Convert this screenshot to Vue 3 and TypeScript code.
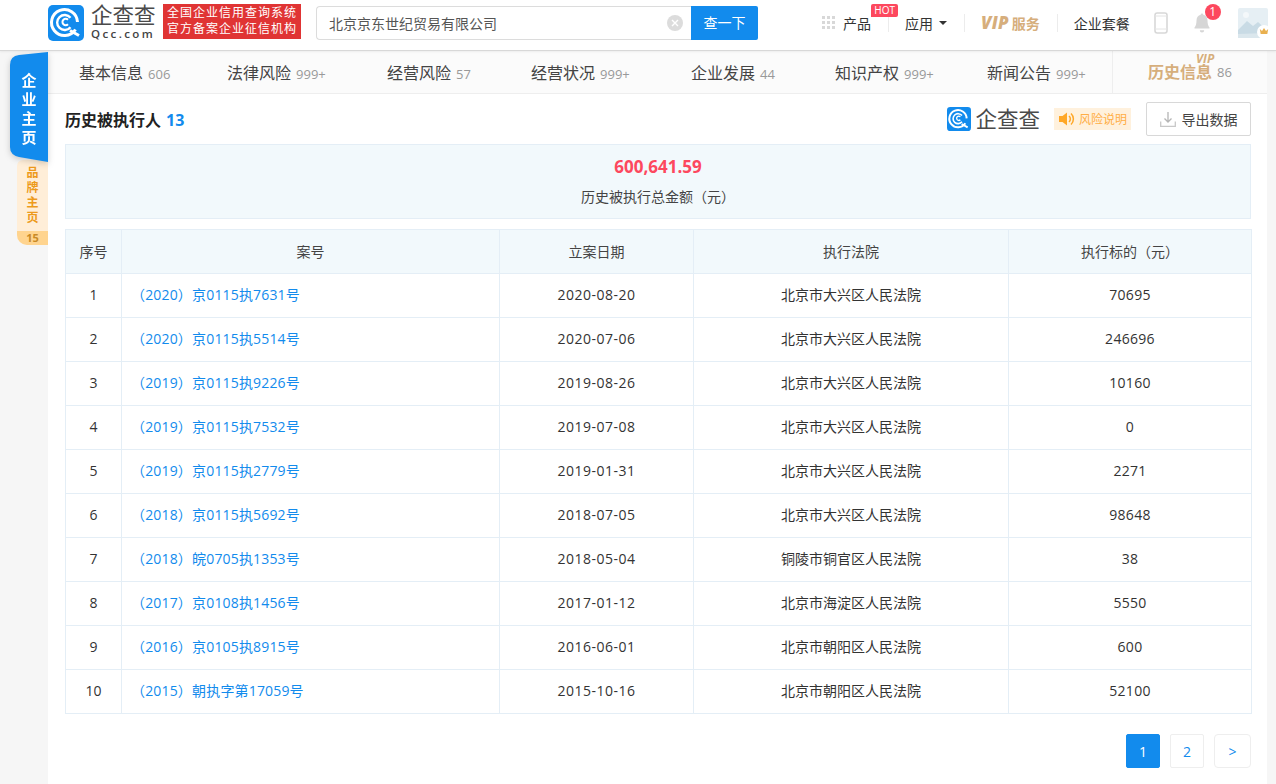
<script setup lang="ts">
interface Row { no: number; caseNo: string; date: string; court: string; amount: string }
const rows: Row[] = [
  { no: 1, caseNo: '（2020）京0115执7631号', date: '2020-08-20', court: '北京市大兴区人民法院', amount: '70695' },
  { no: 2, caseNo: '（2020）京0115执5514号', date: '2020-07-06', court: '北京市大兴区人民法院', amount: '246696' },
  { no: 3, caseNo: '（2019）京0115执9226号', date: '2019-08-26', court: '北京市大兴区人民法院', amount: '10160' },
  { no: 4, caseNo: '（2019）京0115执7532号', date: '2019-07-08', court: '北京市大兴区人民法院', amount: '0' },
  { no: 5, caseNo: '（2019）京0115执2779号', date: '2019-01-31', court: '北京市大兴区人民法院', amount: '2271' },
  { no: 6, caseNo: '（2018）京0115执5692号', date: '2018-07-05', court: '北京市大兴区人民法院', amount: '98648' },
  { no: 7, caseNo: '（2018）皖0705执1353号', date: '2018-05-04', court: '铜陵市铜官区人民法院', amount: '38' },
  { no: 8, caseNo: '（2017）京0108执1456号', date: '2017-01-12', court: '北京市海淀区人民法院', amount: '5550' },
  { no: 9, caseNo: '（2016）京0105执8915号', date: '2016-06-01', court: '北京市朝阳区人民法院', amount: '600' },
  { no: 10, caseNo: '（2015）朝执字第17059号', date: '2015-10-16', court: '北京市朝阳区人民法院', amount: '52100' },
]
const tabs = [
  { name: '基本信息', count: '606' },
  { name: '法律风险', count: '999+' },
  { name: '经营风险', count: '57' },
  { name: '经营状况', count: '999+' },
  { name: '企业发展', count: '44' },
  { name: '知识产权', count: '999+' },
  { name: '新闻公告', count: '999+' },
]
const dots = Array.from({ length: 9 }, (_, i) => i)
</script>

<template>
  <div class="page">
    <header class="topbar">
      <div class="brand">
        <svg class="logo-icon" viewBox="0 0 36 36" width="36" height="36">
          <rect width="36" height="36" rx="5" fill="#128bed" />
          <path d="M27.500 24.500A13 13 0 1 1 29.500 17" fill="none" stroke="#fff" stroke-width="3" />
          <path d="M22.500 12.800A7.500 7.500 0 1 0 22.500 22.200" fill="none" stroke="#fff" stroke-width="2.400" />
          <path d="M20 14.800a3.200 3.200 0 1 0 0 4.400" fill="none" stroke="#fff" stroke-width="2" />
          <path d="M22 25.500l9 5" stroke="#fff" stroke-width="3" />
        </svg>
        <div class="logo-text">
          <div class="logo-cn">企查查</div>
          <div class="logo-en">Qcc.com</div>
        </div>
        <div class="slogan">
          <div>全国企业信用查询系统</div>
          <div>官方备案企业征信机构</div>
        </div>
      </div>
      <div class="search">
        <div class="search-input">
          <span>北京京东世纪贸易有限公司</span>
          <svg class="clear" viewBox="0 0 16 16" width="16" height="16">
            <circle cx="8" cy="8" r="8" fill="#dcdcdc" />
            <path d="M5 5l6 6M11 5l-6 6" stroke="#fff" stroke-width="1.400" />
          </svg>
        </div>
        <div class="search-btn">查一下</div>
      </div>
      <nav class="topnav">
        <div class="nav-item product">
          <span class="grid-dots"><i v-for="d in dots" :key="d"></i></span>
          <span>产品</span>
          <span class="hot">HOT</span>
        </div>
        <span class="sep"></span>
        <div class="nav-item apps"><span>应用</span><span class="caret"></span></div>
        <span class="sep"></span>
        <div class="nav-item vip"><span class="vip-mark">VIP</span><span>服务</span></div>
        <span class="sep"></span>
        <div class="nav-item plan">企业套餐</div>
        <svg class="phone" viewBox="0 0 14 22" width="14" height="22">
          <rect x="1" y="1" width="12" height="20" rx="2.200" fill="#fff" stroke="#d8d8d8" stroke-width="1.600" />
          <path d="M1 17h12M1 4h12" stroke="#e4e4e4" stroke-width="1" />
        </svg>
        <div class="bell">
          <svg viewBox="0 0 16 20" width="16" height="20">
            <path d="M8 0.500c.8 0 1.300.6 1.300 1.300 2.700.6 4.200 2.800 4.200 5.700 0 3.500.7 5.500 2 7v1H.5v-1c1.300-1.500 2-3.500 2-7 0-2.900 1.500-5.100 4.200-5.700C6.700 1.100 7.200.5 8 .5z" fill="#d6d6d6" />
            <path d="M5.800 17.300h4.400a2.200 2.200 0 0 1-4.400 0z" fill="#d6d6d6" />
          </svg>
          <span class="badge">1</span>
        </div>
        <div class="avatar">
          <svg viewBox="0 0 30 30" width="30" height="30">
            <rect width="30" height="30" rx="2" fill="#e6eff4" />
            <circle cx="8" cy="7" r="3" fill="#f4f8fa" />
            <path d="M0 22l9-9 6 5 5-4 10 9v7H0z" fill="#c9dbe5" />
            <path d="M0 26l30-1v5H0z" fill="#dbe7ed" />
          </svg>
          <span class="crown">
            <svg viewBox="0 0 12 10" width="10" height="9"><path d="M1 2l2.600 2.500L6 .8l2.400 3.700L11 2l-1 6H2z" fill="#e9b04f" /></svg>
          </span>
        </div>
      </nav>
    </header>

    <div class="body">
      <aside class="rail">
        <div class="rail-main-wrap">
          <div class="rail-main">企<br />业<br />主<br />页</div>
        </div>
        <div class="rail-brand">
          <div class="rail-brand-text">品<br />牌<br />主<br />页</div>
          <div class="rail-brand-count">15</div>
        </div>
      </aside>

      <main class="main">
        <div class="tabs">
          <div v-for="t in tabs" :key="t.name" class="tab">
            <span class="tab-name">{{ t.name }}</span><span class="tab-count">{{ t.count }}</span>
          </div>
          <div class="tab tab-history">
            <span class="tab-name">历史信息</span><span class="tab-count">86</span>
            <span class="tab-vip">VIP</span>
          </div>
        </div>

        <section class="content">
          <div class="section-head">
            <h3 class="section-title">历史被执行人<span class="section-count">13</span></h3>
            <div class="section-tools">
              <div class="mini-logo">
                <svg viewBox="0 0 36 36" width="24" height="24">
                  <rect width="36" height="36" rx="5" fill="#128bed" />
                  <path d="M27.500 24.500A13 13 0 1 1 29.500 17" fill="none" stroke="#fff" stroke-width="3" />
                  <path d="M22.500 12.800A7.500 7.500 0 1 0 22.500 22.200" fill="none" stroke="#fff" stroke-width="2.400" />
                  <path d="M20 14.800a3.200 3.200 0 1 0 0 4.400" fill="none" stroke="#fff" stroke-width="2" />
                  <path d="M22 25.500l9 5" stroke="#fff" stroke-width="3" />
                </svg>
                <span>企查查</span>
              </div>
              <div class="risk">
                <svg viewBox="0 0 18 14" width="18" height="14">
                  <path d="M0 4h3.500L8 .5v13L3.500 10H0z" fill="#ffa726" />
                  <path d="M10 4a4 4 0 0 1 0 6M12 1.500a7.500 7.500 0 0 1 0 11" fill="none" stroke="#ffa726" stroke-width="1.500" />
                </svg>
                <span>风险说明</span>
              </div>
              <div class="export">
                <svg viewBox="0 0 16 16" width="16" height="16">
                  <path d="M8 1v10M4.500 7.500L8 11l3.500-3.500" fill="none" stroke="#b5b5b5" stroke-width="1.300" />
                  <path d="M.7 10.500v4.800h14.600v-4.800" fill="none" stroke="#c8c8c8" stroke-width="1.300" />
                </svg>
                <span>导出数据</span>
              </div>
            </div>
          </div>

          <div class="summary">
            <div class="summary-num">600,641.59</div>
            <div class="summary-label">历史被执行总金额（元）</div>
          </div>

          <table class="table">
            <colgroup>
              <col class="c1" /><col class="c2" /><col class="c3" /><col class="c4" /><col class="c5" />
            </colgroup>
            <thead>
              <tr><th>序号</th><th>案号</th><th>立案日期</th><th>执行法院</th><th>执行标的（元）</th></tr>
            </thead>
            <tbody>
              <tr v-for="r in rows" :key="r.no">
                <td>{{ r.no }}</td>
                <td class="case">{{ r.caseNo }}</td>
                <td class="date">{{ r.date }}</td>
                <td class="court">{{ r.court }}</td>
                <td class="amount">{{ r.amount }}</td>
              </tr>
            </tbody>
          </table>

          <div class="pager">
            <span class="page-btn active">1</span>
            <span class="page-btn">2</span>
            <span class="page-btn next">&gt;</span>
          </div>
        </section>
      </main>
    </div>
  </div>
</template>

<style>
html, body { margin: 0; background: #f6f6f6; }
</style>

<style scoped>
* { box-sizing: border-box; }
.page {
  width: 1276px;
  height: 784px;
  overflow: hidden;
  background: #f6f6f6;
  font-family: "Open Sans", "Noto Sans CJK SC", sans-serif;
  font-size: 14px;
  color: #333;
}
.topbar {
  height: 51px;
  background: #fff;
  border-bottom: 1px solid #d8d8d8;
  box-shadow: 0 1px 2px rgba(0,0,0,.06);
  display: flex;
  align-items: center;
  padding-left: 48px;
  position: relative;
  z-index: 3;
}
.brand { display: flex; align-items: center; width: 268px; flex: none; }
.logo-icon { display: block; margin-top: -5px; flex: none; }
.logo-text { margin-left: 7px; margin-top: -5px; width: 65px; flex: none; }
.logo-cn { font-size: 21.500px; line-height: 20px; color: #4a4a4a; white-space: nowrap; }
.logo-en { font-size: 11.500px; line-height: 13px; letter-spacing: 2.400px; font-weight: 600; color: #444; white-space: nowrap; margin-top: 2px; }
.slogan {
  margin-left: 7px; margin-top: -8px;
  width: 138px; height: 35px;
  background: #e03434;
  color: #fff;
  font-size: 12px; line-height: 16px;
  letter-spacing: 1px;
  padding: 1px 0 0 4px;
  white-space: nowrap;
}
.search { display: flex; height: 34px; margin-top: -5px; flex: none; }
.search-input {
  width: 375px;
  border: 1px solid #dcdcdc;
  border-right: 0;
  border-radius: 4px 0 0 4px;
  display: flex; align-items: center; justify-content: space-between;
  padding: 0 8px 0 12px;
  color: #555;
}
.search-btn {
  width: 67px;
  background: #128bed;
  color: #fff;
  border-radius: 0 2px 2px 0;
  text-align: center;
  line-height: 34px;
}
.topnav { display: flex; align-items: center; margin-left: 64px; height: 30px; margin-top: -5px; font-size: 14px; color: #333; }
.nav-item { display: flex; align-items: center; white-space: nowrap; }
.product { position: relative; }
.grid-dots { display: grid; grid-template-columns: repeat(3, 3px); gap: 2px; margin-right: 8px; }
.grid-dots i { width: 3px; height: 3px; background: #d8d8d8; display: block; }
.hot {
  position: absolute; right: -27px; top: -9px;
  background: #fd485e; color: #fff;
  font-size: 10px; line-height: 13px;
  padding: 0 3px; border-radius: 2px 2px 2px 0;
}
.sep { width: 1px; height: 18px; background: #ececec; margin: 0 16px 0 17px; }
.apps .caret {
  display: inline-block; margin-left: 6px;
  border-left: 4px solid transparent; border-right: 4px solid transparent;
  border-top: 4px solid #333;
}
.vip { color: #d6ae7c; font-weight: 700; }
.vip-mark { font-style: italic; font-size: 17px; font-weight: 800; letter-spacing: .2px; margin-right: 3px; }
.phone { margin-left: 24px; flex: none; }
.bell { position: relative; margin-left: 26px; width: 16px; height: 20px; flex: none; }
.bell svg { display: block; }
.badge {
  position: absolute; left: 11px; top: -9px;
  width: 16px; height: 16px; border-radius: 50%;
  background: #fd485e; color: #fff;
  font-size: 12px; line-height: 16px; text-align: center;
}
.avatar { position: relative; margin-left: 28px; width: 30px; height: 30px; flex: none; }
.avatar svg { display: block; }
.crown {
  position: absolute; right: -3px; bottom: -1px;
  width: 14px; height: 14px; border-radius: 50%;
  background: #fff; display: flex; align-items: center; justify-content: center;
}
.body { display: flex; height: 733px; }
.rail { width: 48px; flex: none; position: relative; }
.rail-main-wrap {
  position: absolute; left: 10px; top: 1px; z-index: 2;
  filter: drop-shadow(0 2px 3px rgba(0,0,0,.18));
}
.rail-main {
  width: 38px; height: 110px;
  background: #128bed; color: #fff;
  clip-path: path('M0 13 Q0 4 9 3 L38 0 L38 110 L9 105 Q0 103 0 95 Z');
  font-size: 15px; font-weight: 700; line-height: 19px;
  text-align: center; padding-top: 19px;
}
.rail-brand {
  position: absolute; left: 17px; top: 109px;
  width: 31px; height: 85px;
  background: #ffeed8;
  border-radius: 6px 0 0 10px;
  color: #ed9a1c;
  font-size: 12px; font-weight: 700;
  text-align: center; overflow: hidden;
}
.rail-brand-text { padding-top: 5px; line-height: 15px; height: 71px; }
.rail-brand-count { background: #ffd48f; height: 14px; font-size: 11px; font-weight: 700; line-height: 14px; color: #c98a26; }
.main { width: 1219px; flex: none; background: #fff; }
.tabs {
  height: 43px;
  background: #fbfbfb;
  border-bottom: 1px solid #eee;
  display: grid;
  grid-template-columns: 148px 160px 144px 160px 144px 152px 125px 155px;
  align-items: center;
  padding-left: 31px;
}
.tab { white-space: nowrap; font-size: 16px; color: #444; }
.tab-count { font-size: 13px; color: #999; margin-left: 5px; }
.tab-history {
  position: relative; align-self: stretch; display: flex; align-items: center;
  border-left: 1px solid #eee;
  padding-left: 35px;
  color: #d6ae7c; font-weight: 700;
}
.tab-history .tab-name { line-height: 18px; }
.tab-history .tab-count { font-weight: 400; line-height: 18px; }
.tab-vip { position: absolute; left: 83px; top: 2px; font-size: 12px; line-height: 12px; font-style: italic; font-weight: 700; color: #d6ae7c; }
.content { padding: 0 16px 0 17px; }
.section-head { height: 50px; display: flex; align-items: center; justify-content: space-between; }
.section-title { margin: 0; font-size: 16px; font-weight: 700; color: #222; }
.section-count { color: #128bed; margin-left: 5px; }
.section-tools { display: flex; align-items: center; }
.mini-logo { display: flex; align-items: center; font-size: 21.500px; line-height: 24px; color: #4a4a4a; }
.mini-logo span { margin-left: 4px; }
.risk {
  display: flex; align-items: center;
  margin-left: 14px; width: 77px; height: 22px; padding-left: 5px;
  background: #fff1dd; color: #ffae45; font-size: 12px; flex: none;
}
.risk span { margin-left: 2px; }
.export {
  margin-left: 15px;
  width: 105px; height: 34px;
  border: 1px solid #d8d8d8; border-radius: 2px;
  display: flex; align-items: center; justify-content: center; gap: 6px;
  font-size: 14px; color: #444; flex: none;
}
.summary {
  height: 75px;
  background: #f2f9fc;
  border: 1px solid #e4eef6;
  text-align: center;
}
.summary-num { color: #fd485e; font-size: 17px; font-weight: 700; line-height: 22px; margin-top: 11px; }
.summary-label { font-size: 14px; color: #444; line-height: 20px; margin-top: 9px; }
.table {
  margin-top: 10px;
  width: 1186px;
  table-layout: fixed;
  border-collapse: collapse;
  font-size: 14px;
  color: #333;
}
.c1 { width: 56px; } .c2 { width: 378px; } .c3 { width: 194px; } .c4 { width: 315px; } .c5 { width: 243px; }
.table th, .table td {
  border: 1px solid #e4eef6;
  height: 44px; padding: 0 0 2px;
  text-align: center; font-weight: 400;
}
.table th { background: #f2f9fc; color: #444; }
.table td.case { text-align: left; color: #128bed; padding: 0 0 4px 9px; letter-spacing: .17px; }
.table td.court { padding-bottom: 4px; }
.table td.date { letter-spacing: .5px; }
.table td.amount { letter-spacing: .3px; }
.pager { display: flex; justify-content: flex-end; gap: 10px; margin-top: 20px; }
.page-btn {
  width: 34px; height: 34px;
  border: 1px solid #eee;
  color: #128bed; font-size: 14px;
  display: flex; align-items: center; justify-content: center;
  border-radius: 2px;
}
.page-btn.next { width: 37px; border-radius: 4px; }
.page-btn.active { background: #128bed; border-color: #128bed; color: #fff; }
</style>
